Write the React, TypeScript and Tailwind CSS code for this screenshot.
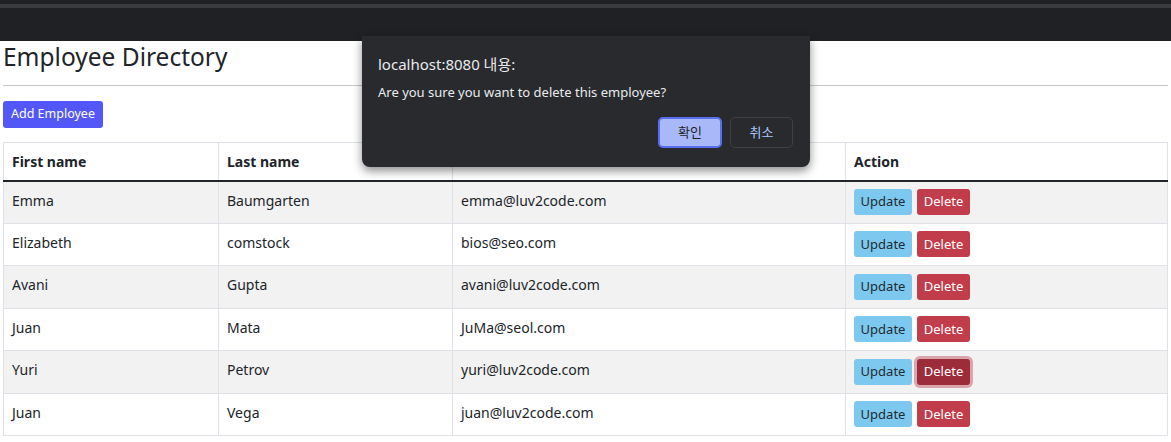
import React from 'react'

interface Employee {
  firstName: string
  lastName: string
  email: string
}

const EMPLOYEES: Employee[] = [
  { firstName: 'Emma', lastName: 'Baumgarten', email: 'emma@luv2code.com' },
  { firstName: 'Elizabeth', lastName: 'comstock', email: 'bios@seo.com' },
  { firstName: 'Avani', lastName: 'Gupta', email: 'avani@luv2code.com' },
  { firstName: 'Juan', lastName: 'Mata', email: 'JuMa@seol.com' },
  { firstName: 'Yuri', lastName: 'Petrov', email: 'yuri@luv2code.com' },
  { firstName: 'Juan', lastName: 'Vega', email: 'juan@luv2code.com' },
]

const FONT = { fontFamily: '"Noto Sans", "Noto Sans CJK KR", sans-serif' }

function ConfirmDialog() {
  return (
    <div className="absolute left-[362px] top-[36px] w-[448px] h-[131px] bg-[#292a2d] rounded-b-lg shadow-[0_4px_10px_rgba(0,0,0,0.45)] px-4 pt-[18px]">
      <p className="text-[15px] leading-5 text-[#e8eaed]">localhost:8080 내용:</p>
      <p className="text-[13px] leading-4 text-[#e8eaed] mt-[10px]">Are you sure you want to delete this employee?</p>
      <div className="flex justify-end gap-2 mt-[17px] pr-[1px]">
        <button className="w-[64px] h-[31px] rounded-[5px] bg-[#a8b8f8] border-2 border-[#5a6ff0] text-[13px] text-[#1f1f1f]">
          확인
        </button>
        <button className="w-[63px] h-[31px] rounded-[5px] border border-[#3f4044] text-[13px] text-[#a8c7fa]">
          취소
        </button>
      </div>
    </div>
  )
}

export default function App() {
  const cell = 'px-2 pb-[4px] border border-[#dee2e6]'
  return (
    <div className="relative w-[1171px] h-[442px] overflow-hidden bg-white text-[#212529]" style={FONT}>
      {/* browser chrome */}
      <div className="h-[41px] bg-[#202124] flex flex-col">
        <div className="h-[4px]" />
        <div className="h-[4px] bg-[#3a3b3f]" />
      </div>

      <div className="pl-[3px] pr-[3px]">
        <h1 className="text-[24.5px] leading-8 font-normal">Employee Directory</h1>
        <hr className="mt-[12px] border-t border-[#c8c8c8]" />
        <button className="mt-[15px] h-[27px] px-[8px] rounded-[3px] bg-[#5457f7] text-white text-[12.5px]">
          Add Employee
        </button>

        <table className="mt-[14px] w-[1165px] border-collapse text-[14px] table-fixed">
          <colgroup>
            <col className="w-[215px]" />
            <col className="w-[234px]" />
            <col className="w-[393px]" />
            <col />
          </colgroup>
          <thead>
            <tr className="h-[38px]">
              <th className="text-left font-bold px-2 border border-[#dee2e6] border-b-2 border-b-[#212529]">First name</th>
              <th className="text-left font-bold px-2 border border-[#dee2e6] border-b-2 border-b-[#212529]">Last name</th>
              <th className="text-left font-bold px-2 border border-[#dee2e6] border-b-2 border-b-[#212529]">Email</th>
              <th className="text-left font-bold px-2 border border-[#dee2e6] border-b-2 border-b-[#212529]">Action</th>
            </tr>
          </thead>
          <tbody>
            {EMPLOYEES.map((e, i) => (
              <tr key={i} className={`h-[42.5px] ${i % 2 === 0 ? 'bg-[#f2f2f2]' : 'bg-white'}`}>
                <td className={cell}>{e.firstName}</td>
                <td className={cell}>{e.lastName}</td>
                <td className={cell}>{e.email}</td>
                <td className="px-2 border border-[#dee2e6]">
                  <div className="flex items-center gap-[5px]">
                    <button className="h-[26px] w-[58px] rounded-[3px] bg-[#7dc8ee] text-[13px] text-[#1f2b33]">Update</button>
                    {i === 4 ? (
                      <button className="h-[26px] w-[53px] rounded-[3px] bg-[#9d2c3b] text-[13px] text-white ring-[3px] ring-[#dca4ad]">Delete</button>
                    ) : (
                      <button className="h-[26px] w-[53px] rounded-[3px] bg-[#c13d4c] text-[13px] text-white">Delete</button>
                    )}
                  </div>
                </td>
              </tr>
            ))}
          </tbody>
        </table>
      </div>

      <ConfirmDialog />
    </div>
  )
}
